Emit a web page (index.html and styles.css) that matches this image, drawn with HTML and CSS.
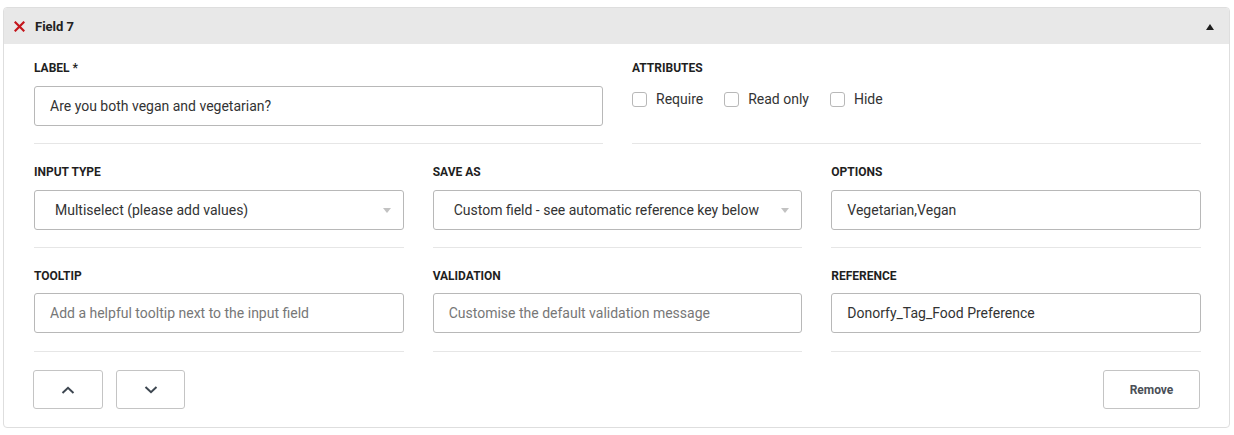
FILE: index.html
```html
<!DOCTYPE html>
<html>
<head>
<meta charset="utf-8">
<link rel="stylesheet" href="styles.css">
</head>
<body>
<div class="card">
  <div class="card-head">
    <svg class="x-icon" width="11" height="11" viewBox="0 0 11 11"><path d="M1.5 1.5 L9.5 9.5 M9.5 1.5 L1.5 9.5" stroke="#c4161c" stroke-width="2.2" stroke-linecap="square"/></svg>
    <span class="head-title">Field 7</span>
    <span class="caret-up"></span>
  </div>
  <div class="card-body">
    <div class="row two">
      <div class="field">
        <div class="lbl">LABEL *</div>
        <div class="ctl">Are you both vegan and vegetarian?</div>
      </div>
      <div class="field">
        <div class="lbl">ATTRIBUTES</div>
        <div class="checks">
          <label class="chk"><span class="box"></span>Require</label>
          <label class="chk"><span class="box"></span>Read only</label>
          <label class="chk"><span class="box"></span>Hide</label>
        </div>
      </div>
    </div>
    <div class="row three">
      <div class="field">
        <div class="lbl">INPUT TYPE</div>
        <div class="ctl sel">Multiselect (please add values)<span class="arrow"></span></div>
      </div>
      <div class="field">
        <div class="lbl">SAVE AS</div>
        <div class="ctl sel">Custom field - see automatic reference key below<span class="arrow"></span></div>
      </div>
      <div class="field">
        <div class="lbl">OPTIONS</div>
        <div class="ctl">Vegetarian,Vegan</div>
      </div>
    </div>
    <div class="row three last">
      <div class="field">
        <div class="lbl">TOOLTIP</div>
        <div class="ctl ph">Add a helpful tooltip next to the input field</div>
      </div>
      <div class="field">
        <div class="lbl">VALIDATION</div>
        <div class="ctl ph">Customise the default validation message</div>
      </div>
      <div class="field">
        <div class="lbl">REFERENCE</div>
        <div class="ctl">Donorfy_Tag_Food Preference</div>
      </div>
    </div>
    <div class="actions">
      <button class="btn arrow-btn up"><svg width="14" height="8" viewBox="0 0 14 8"><path d="M1.5 7 L7 1.8 L12.5 7" fill="none" stroke="#3d4650" stroke-width="2"/></svg></button>
      <button class="btn arrow-btn down"><svg width="14" height="8" viewBox="0 0 14 8"><path d="M1.5 1 L7 6.2 L12.5 1" fill="none" stroke="#3d4650" stroke-width="2"/></svg></button>
      <span class="spacer"></span>
      <button class="btn remove">Remove</button>
    </div>
  </div>
</div>
</body>
</html>
```
FILE: styles.css
```css
* { box-sizing: border-box; }
body {
  margin: 0;
  padding: 7px 4px 0 3px;
  background: #fff;
  font-family: Roboto, "Liberation Sans", sans-serif;
  color: #333;
}
.card {
  width: 1227px;
  border: 1px solid #dedede;
  border-radius: 4px;
  background: #fff;
}
.card-head {
  height: 36px;
  background: #e8e8e8;
  display: flex;
  align-items: center;
  padding: 0 15px 0 10px;
  border-radius: 3px 3px 0 0;
}
.x-icon { display: block; margin-top: 1px; }
.head-title {
  margin-left: 10px;
  font-size: 13px;
  font-weight: 700;
  color: #222;
}
.caret-up {
  margin-left: auto;
  width: 0; height: 0;
  border-left: 4px solid transparent;
  border-right: 4px solid transparent;
  border-bottom: 6px solid #1e1e1e;
  margin-top: 1px;
}
.card-body {
  padding: 16px 28px 18px 30px;
}
.row {
  display: grid;
  column-gap: 29px;
  margin-bottom: 20px;
}
.row.two { grid-template-columns: 1fr 1fr; }
.row.three { grid-template-columns: 1fr 1fr 1fr; }
.row.last { margin-bottom: 18px; }
.field {
  padding-bottom: 17px;
  border-bottom: 1px solid #e6e6e6;
}
.row.last .field { padding-bottom: 18px; }
.lbl {
  font-size: 12px;
  font-weight: 700;
  line-height: 14px;
  color: #1f1f1f;
  padding-top: 1px;
  margin-bottom: 11px;
}
.row.last .lbl { margin-bottom: 10px; }
.ctl {
  position: relative;
  height: 40px;
  border: 1px solid #b8b8b8;
  border-radius: 3px;
  padding: 0 15px;
  font-size: 14px;
  line-height: 38px;
  color: #333;
  white-space: nowrap;
  overflow: hidden;
}
.ctl.sel { padding-left: 20px; }
.ctl.ph { color: #777; }
.arrow {
  position: absolute;
  right: 12px;
  top: 17px;
  width: 0; height: 0;
  border-left: 4px solid transparent;
  border-right: 4px solid transparent;
  border-top: 5px solid #c2c2c2;
}
.checks {
  height: 40px;
  display: flex;
  align-items: flex-start;
  padding-top: 4px;
  gap: 21px;
}
.chk {
  display: flex;
  align-items: center;
  gap: 9px;
  font-size: 14px;
  line-height: 18px;
  color: #333;
}
.box {
  width: 15px; height: 15px;
  border: 1px solid #b8b8b8;
  border-radius: 3px;
  background: #fff;
}
.actions {
  display: flex;
  align-items: center;
  gap: 13px;
}
.spacer { flex: 1; }
.btn {
  height: 39px;
  border: 1px solid #c4c4c4;
  border-radius: 3px;
  background: #fff;
  font-family: Roboto, "Liberation Sans", sans-serif;
  display: flex;
  align-items: center;
  justify-content: center;
  padding: 0;
  margin: 0;
}
.btn.up { width: 70px; margin-left: -1px; }
.btn.down { width: 69px; }
.btn svg { display: block; }
.btn.remove {
  width: 97px;
  font-size: 12px;
  font-weight: 700;
  color: #4a4f57;
  margin-right: 1px;
}
```
